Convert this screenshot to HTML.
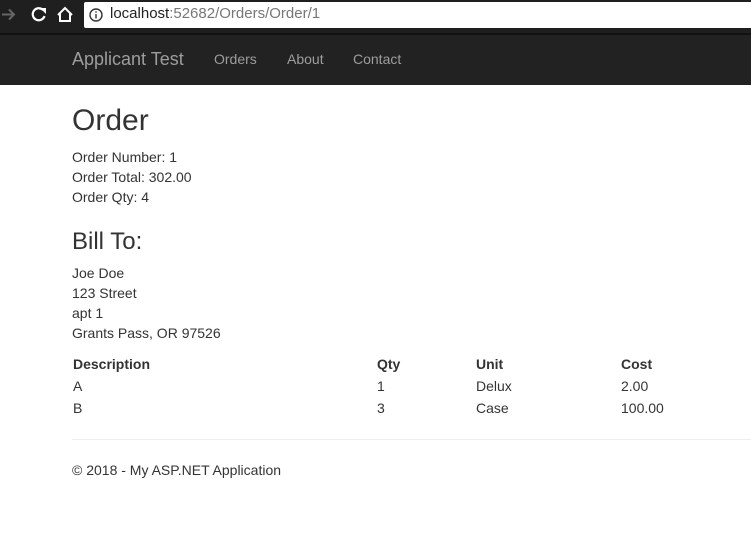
<!DOCTYPE html>
<html><head><style>
body{margin:0;width:751px;height:546px;overflow:hidden;background:#fff;font-family:"Liberation Sans",sans-serif;font-size:14px;color:#333;position:relative}
.a{position:absolute;white-space:nowrap}
</style></head><body>
<div class="a" style="left:0;top:0;width:751px;height:33px;background:#1f1f1f"></div>
<svg class="a" style="left:0;top:0" width="84" height="32">
<path d="M2 14.5h12M9 9.5l5 5-5 5" stroke="#666" stroke-width="2" fill="none"/>
<path d="M43 10a6 6 0 1 0 1.5 6" stroke="#fff" stroke-width="2.2" fill="none"/><path d="M40 8h6v6z" fill="#fff"/>
<path d="M58 15l7-7 7 7M60 13v8h10v-8" stroke="#fff" stroke-width="2" fill="none"/>
</svg>
<div class="a" style="left:84px;top:2px;width:667px;height:26px;background:#fff;border-radius:2px 0 0 2px"></div>
<svg class="a" style="left:89px;top:8px" width="14" height="14"><circle cx="7" cy="7" r="6" stroke="#333" stroke-width="1.4" fill="none"/><rect x="6.3" y="6" width="1.4" height="4.5" fill="#333"/><rect x="6.3" y="3.3" width="1.4" height="1.4" fill="#333"/></svg>
<div class="a" style="left:110px;top:5px;font-size:15px;color:#222">localhost<span style="color:#777">:52682/Orders/Order/1</span></div>
<div class="a" style="left:0;top:33px;width:751px;height:52px;background:#222;border-top:2px solid #111;box-sizing:border-box"></div>
<div class="a" style="left:72px;top:49px;font-size:18px;color:#9d9d9d">Applicant Test</div>
<div class="a" style="left:214px;top:51px;color:#9d9d9d">Orders</div>
<div class="a" style="left:287px;top:51px;color:#9d9d9d">About</div>
<div class="a" style="left:353px;top:51px;color:#9d9d9d">Contact</div>
<div class="a" style="left:72px;top:104px;font-size:30px">Order</div>
<div class="a" style="left:72px;top:147px;line-height:20px">Order Number: 1<br>Order Total: 302.00<br>Order Qty: 4</div>
<div class="a" style="left:72px;top:228px;font-size:24px">Bill To:</div>
<div class="a" style="left:72px;top:263px;line-height:20px">Joe Doe<br>123 Street<br>apt 1<br>Grants Pass, OR 97526</div>
<div class="a" style="left:73px;top:356px;font-weight:bold">Description</div>
<div class="a" style="left:377px;top:356px;font-weight:bold">Qty</div>
<div class="a" style="left:476px;top:356px;font-weight:bold">Unit</div>
<div class="a" style="left:621px;top:356px;font-weight:bold">Cost</div>
<div class="a" style="left:73px;top:378px">A</div><div class="a" style="left:377px;top:378px">1</div><div class="a" style="left:476px;top:378px">Delux</div><div class="a" style="left:621px;top:378px">2.00</div>
<div class="a" style="left:73px;top:400px">B</div><div class="a" style="left:377px;top:400px">3</div><div class="a" style="left:476px;top:400px">Case</div><div class="a" style="left:621px;top:400px">100.00</div>
<div class="a" style="left:72px;top:439px;width:679px;height:1px;background:#eee"></div>
<div class="a" style="left:72px;top:462px">© 2018 - My ASP.NET Application</div>
</body></html>
